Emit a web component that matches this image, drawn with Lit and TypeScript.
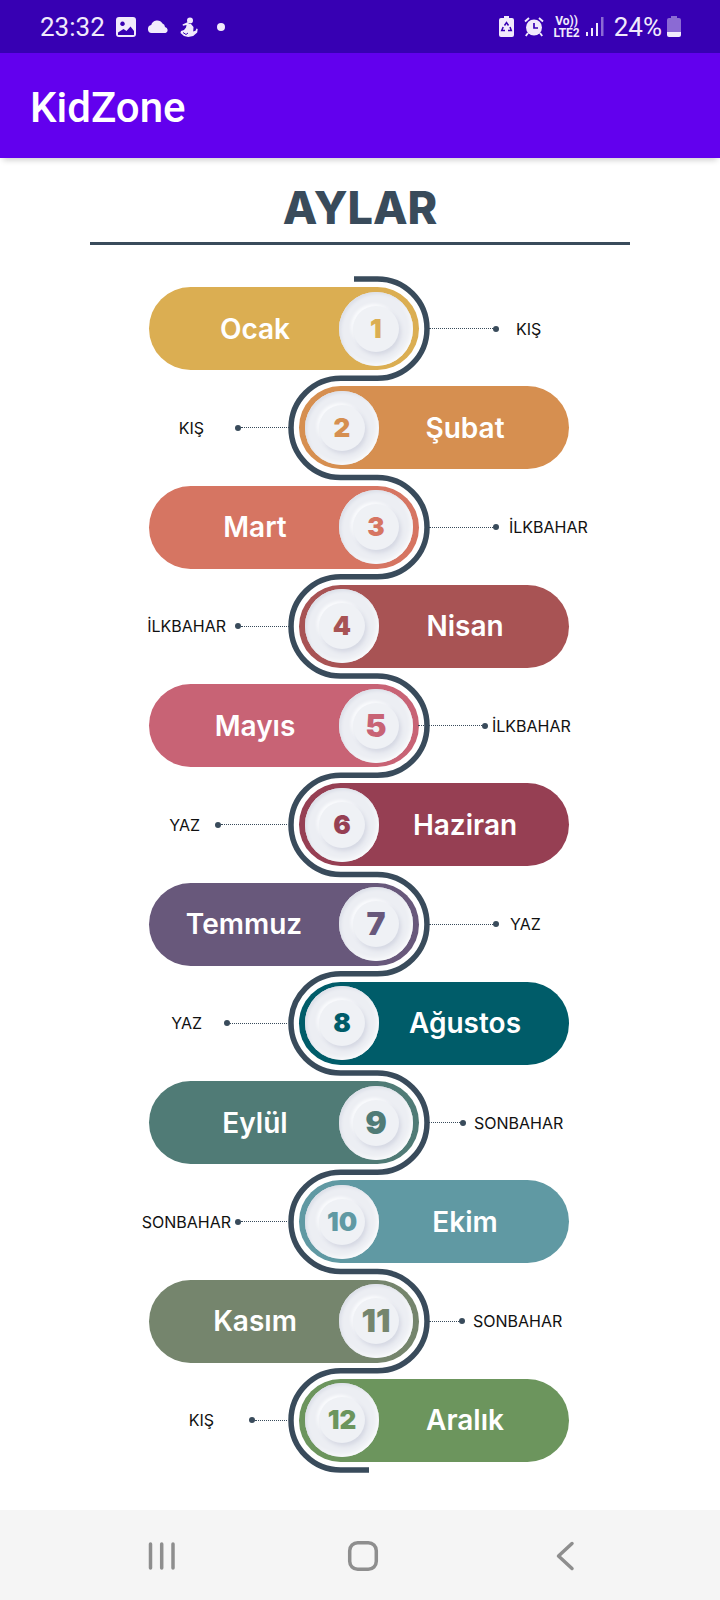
import { LitElement, html, css, svg } from "lit";
import { customElement, property } from "lit/decorators.js";
import { classMap } from "lit/directives/class-map.js";
import { styleMap } from "lit/directives/style-map.js";

interface Month {
  name: string;
  season: string;
  color: string;
  /** Length of the dotted connector including its end dot. */
  reach: number;
  /** Space between the end dot and the season name. */
  gap: number;
  /** Space between the track and the start of the connector. */
  lead?: number;
  big?: boolean;
}

const MONTHS: Month[] = [
  { name: "Ocak", season: "KIŞ", color: "#dbae52", reach: 70, gap: 17 },
  { name: "Şubat", season: "KIŞ", color: "#d68f50", reach: 54, gap: 31 },
  { name: "Mart", season: "İLKBAHAR", color: "#d67562", reach: 70, gap: 10 },
  { name: "Nisan", season: "İLKBAHAR", color: "#a85354", reach: 54, gap: 9 },
  { name: "Mayıs", season: "İLKBAHAR", color: "#c86375", reach: 70, gap: 4, lead: -11, big: true },
  { name: "Haziran", season: "YAZ", color: "#963f53", reach: 72, gap: 15, lead: 2 },
  { name: "Temmuz", season: "YAZ", color: "#68587b", reach: 70, gap: 11, big: true },
  { name: "Ağustos", season: "YAZ", color: "#005c69", reach: 63, gap: 22, lead: 2 },
  { name: "Eylül", season: "SONBAHAR", color: "#507b76", reach: 37, gap: 8, big: true },
  { name: "Ekim", season: "SONBAHAR", color: "#6099a3", reach: 52, gap: 4, lead: 2 },
  { name: "Kasım", season: "SONBAHAR", color: "#75856d", reach: 36, gap: 8, big: true },
  { name: "Aralık", season: "KIŞ", color: "#6c955d", reach: 38, gap: 35, lead: 2 },
];

@customElement("status-bar")
export class StatusBar extends LitElement {
  static styles = css`
    :host {
      display: flex;
      align-items: center;
      justify-content: space-between;
      height: 53px;
      padding: 0 39px 0 40px;
      background: #3700b3;
      color: #f1eafc;
      font: 400 26px/32px Roboto, sans-serif;
    }
    .side {
      display: flex;
      align-items: center;
    }
    .left {
      gap: 11px;
    }
    .right {
      gap: 5px;
    }
    svg {
      display: block;
      fill: currentColor;
    }
    .dot {
      width: 8px;
      height: 8px;
      margin-left: 8px;
      border-radius: 50%;
      background: currentColor;
    }
    .saver {
      margin-right: 5px;
    }
    .alarm {
      margin-right: 4px;
    }
    .network {
      display: grid;
      font: 700 12px/12px Roboto, sans-serif;
      text-align: center;
    }
    .level {
      margin-left: 5px;
    }
  `;

  render() {
    return html`
      <div class="side left">
        <span>23:32</span>
        <svg width="20" height="20" viewBox="0 0 20 20" role="img" aria-label="Görsel">
          <path fill-rule="evenodd" d="M3 0h14a3 3 0 0 1 3 3v14a3 3 0 0 1-3 3H3a3 3 0 0 1-3-3V3a3 3 0 0 1 3-3Zm-1 15.500V18h16v-4l-3.500-4.500-4 4.500-3-2ZM6.500 4.500a2.300 2.300 0 1 0 .01 0Z"/>
        </svg>
        <svg width="22" height="14" viewBox="0 0 22 14" role="img" aria-label="Hava durumu">
          <path d="M4.500 13a4 4 0 0 1-.3-7.900A6.200 6.200 0 0 1 15.500 3.500 4 4 0 0 1 18 7a3.100 3.100 0 0 1 .5 6Z"/>
        </svg>
        <svg width="18" height="20" viewBox="0 0 18 20" role="img" aria-label="Uygulama">
          <circle cx="10" cy="3.500" r="3"/>
          <path d="M2.500 7.500 8 5l1 2h2l2.500 3-.3 4.500 2.300-.7 1-2.300 1.200.5-.5 3.500-4 3.500-5 1L4 19l-3.500-3L1 14l3-1 2-2.500.5-2.500-3.500.8Z"/>
          <path d="M3 15.500 6 17.500 8 16" fill="none" stroke="#3700b3" stroke-width="1"/>
        </svg>
        <span class="dot"></span>
      </div>
      <div class="side right">
        <svg class="saver" width="15" height="21" viewBox="0 0 15 21" role="img" aria-label="Pil koruma">
          <path d="M5 0h5v2h3a2 2 0 0 1 2 2v15a2 2 0 0 1-2 2H2a2 2 0 0 1-2-2V4a2 2 0 0 1 2-2h3Z"/>
          <path d="M5.500 9.500 7.500 6.500 9.500 9.500M11 11l1.300 3.500H9M6 14.500H2.700L4.200 11" fill="none" stroke="#3700b3" stroke-width="1.500"/>
        </svg>
        <svg class="alarm" width="20" height="20" viewBox="0 0 20 20" role="img" aria-label="Alarm">
          <circle cx="10" cy="10.500" r="8"/>
          <path d="M1 4.500 5 1M19 4.500 15 1M4 16 1.800 19M16 16l2.200 3" fill="none" stroke="currentColor" stroke-width="1.900"/>
          <path d="M10 6v5h4" fill="none" stroke="#3700b3" stroke-width="1.700"/>
        </svg>
        <span class="network"><span>Vo))</span><span>LTE2</span></span>
        <svg width="19" height="20" viewBox="0 0 19 20" role="img" aria-label="Sinyal">
          <path d="M1 15h2v4H1zM6 11h2v8H6zM11 6h2v13h-2z"/>
          <path opacity=".45" d="M16 0h2.500v19H16z"/>
        </svg>
        <span class="level">24%</span>
        <svg width="14" height="21" viewBox="0 0 14 21" role="img" aria-label="Pil">
          <path opacity=".45" d="M4 0h6v2h2a2 2 0 0 1 2 2v12H0V4a2 2 0 0 1 2-2h2Z"/>
          <path d="M0 16h14v3a2 2 0 0 1-2 2H2a2 2 0 0 1-2-2Z"/>
        </svg>
      </div>
    `;
  }
}

@customElement("month-row")
export class MonthRow extends LitElement {
  @property({ attribute: false }) month!: Month;
  @property({ type: Number }) index = 1;

  static styles = css`
    :host {
      display: block;
      width: 100%;
    }
    .row {
      display: grid;
      grid-template-columns: minmax(0, 1fr) 120px minmax(0, 1fr);
      align-items: center;
    }
    .pill {
      grid-area: 1 / 1 / 2 / 3;
      justify-self: end;
      display: flex;
      align-items: center;
      box-sizing: border-box;
      width: 270px;
      height: 83px;
      padding: 0 6px 0 22px;
      border-radius: 42px;
      background: var(--tone);
    }
    .wide {
      padding-left: 0;
    }
    .name {
      flex: 1;
      text-align: center;
      color: #fff;
      font-weight: 600;
      font-size: 28px;
      line-height: 32px;
    }
    .disc {
      display: grid;
      place-items: center;
      width: 74px;
      height: 74px;
      border-radius: 50%;
      background: #eceef3;
      box-shadow: inset 2px 2px 3px #dde0e9, inset -2px -2px 4px #fafbfc;
    }
    .knob {
      display: grid;
      place-items: center;
      width: 46px;
      height: 46px;
      border-radius: 50%;
      background: #eff1f5;
      box-shadow: 2px 3px 4px #d5d8e3, -2px -2px 3px #fafbfd;
      color: var(--tone);
      font-weight: 900;
      font-size: 26px;
      line-height: 32px;
    }
    .big {
      font-size: 32px;
    }
    .note {
      grid-area: 1 / 3 / 2 / 4;
      display: flex;
      align-items: center;
      padding: 0 10px;
    }
    .line {
      display: flex;
      align-items: center;
      flex: none;
      margin-inline: var(--lead) var(--gap);
    }
    .dots {
      flex: 1;
      border-top: 1px dotted #394b5b;
    }
    .end {
      width: 6px;
      height: 6px;
      border-radius: 50%;
      background: #394b5b;
    }
    .season {
      color: #111;
      font-weight: 400;
      font-size: 16px;
      line-height: 18px;
      white-space: nowrap;
    }
    .even .pill {
      grid-area: 1 / 2 / 2 / 4;
      justify-self: start;
      flex-direction: row-reverse;
      padding: 0 18px 0 6px;
    }
    .even .note {
      grid-area: 1 / 1 / 2 / 2;
      flex-direction: row-reverse;
    }
    .even .line {
      flex-direction: row-reverse;
      margin-inline: var(--gap) var(--lead);
    }
  `;

  render() {
    const m = this.month;
    return html`
      <div
        class=${classMap({ row: true, even: this.index % 2 === 0 })}
        style=${styleMap({ "--tone": m.color, "--lead": `${m.lead ?? 0}px`, "--gap": `${m.gap}px` })}
      >
        <div class=${classMap({ pill: true, wide: m.name.length > 5 && this.index % 2 === 1 })}>
          <span class="name">${m.name}</span>
          <span class="disc">
            <span class=${classMap({ knob: true, big: !!m.big })}>${this.index}</span>
          </span>
        </div>
        <div class="note">
          <span class="line" style=${styleMap({ width: `${m.reach}px` })}>
            <span class="dots"></span><span class="end"></span>
          </span>
          <span class="season">${m.season}</span>
        </div>
      </div>
    `;
  }
}

@customElement("month-chart")
export class MonthChart extends LitElement {
  static styles = css`
    :host {
      display: flex;
      flex-direction: column;
      position: relative;
      padding-right: 2px;
    }
    .track {
      position: absolute;
      inset: 0 2px 0 0;
      margin: 0 auto;
      width: 144px;
      height: 100%;
      overflow: visible;
      fill: none;
      stroke: #394b5b;
    }
    .months {
      flex: 1;
      display: flex;
      flex-direction: column;
      margin: 0;
      padding: 0;
      list-style: none;
    }
    .item {
      flex: 1 0 99px;
      display: flex;
      align-items: center;
      position: relative;
    }
  `;

  private trackPath() {
    const step = 1191 / MONTHS.length;
    const r = step / 2;
    let d = "M67 0";
    MONTHS.forEach((_, i) => {
      const right = i % 2 === 0;
      const x = right ? 140 - r : 4 + r;
      d += `H${x}A${r} ${r} 0 0 ${right ? 1 : 0} ${x} ${(i + 1) * step}`;
    });
    return d + "H82";
  }

  render() {
    return html`
      <svg class="track" viewBox="0 0 144 1191" aria-hidden="true">
        ${svg`<path d=${this.trackPath()} stroke-width="5.500"/>`}
      </svg>
      <ol class="months">
        ${MONTHS.map(
          (m, i) => html`<li class="item"><month-row .month=${m} .index=${i + 1}></month-row></li>`
        )}
      </ol>
    `;
  }
}

@customElement("nav-bar")
export class NavBar extends LitElement {
  static styles = css`
    .bar {
      display: grid;
      grid-template-columns: repeat(3, 1fr);
      box-sizing: border-box;
      height: 90px;
      padding: 2px 57px 0 60px;
      background: #f5f5f5;
    }
    .key {
      display: grid;
      place-items: center;
      padding: 0 0 0 3px;
      border: 0;
      background: none;
      color: #8e8e8e;
    }
    svg {
      fill: none;
      stroke: currentColor;
      stroke-width: 3.500;
      stroke-linecap: round;
      stroke-linejoin: round;
    }
  `;

  render() {
    return html`
      <nav class="bar">
        <button class="key" aria-label="Son uygulamalar">
          <svg width="32" height="32" viewBox="0 0 32 32"><path d="M4.500 4v24M15.700 4v24M27 4v24"/></svg>
        </button>
        <button class="key" aria-label="Ana ekran">
          <svg width="32" height="32" viewBox="0 0 32 32"><rect x="2.700" y="2.700" width="26.600" height="26.600" rx="8"/></svg>
        </button>
        <button class="key" aria-label="Geri">
          <svg width="32" height="32" viewBox="0 0 32 32"><path d="M24 3.500 10.500 16 24 28.500"/></svg>
        </button>
      </nav>
    `;
  }
}

@customElement("app-root")
export class AppRoot extends LitElement {
  static styles = css`
    :host {
      display: flex;
      flex-direction: column;
      min-height: 100vh;
      background: #fff;
      font-family: Inter, "Open Sans", sans-serif;
    }
    .appbar {
      display: flex;
      align-items: center;
      box-sizing: border-box;
      height: 105px;
      padding: 4px 30px 0;
      background: #6200ee;
      box-shadow: 0 5px 6px -3px rgb(0 0 0 / 0.2);
      color: #fff;
      font-family: Roboto, sans-serif;
    }
    .brand {
      font-weight: 500;
      font-size: 42px;
      line-height: 48px;
    }
    .content {
      flex: 1;
      display: flex;
      flex-direction: column;
      box-sizing: border-box;
      width: 100%;
      max-width: 540px;
      margin: 0 auto;
      padding: 22px 0 40px;
    }
    .title {
      margin: 0 0 34px;
      padding-bottom: 6px;
      border-bottom: 3px solid #394b5b;
      color: #394b5b;
      font-weight: 800;
      font-size: 45px;
      line-height: 56px;
      text-align: center;
    }
    .chart {
      flex: 1;
    }
  `;

  render() {
    return html`
      <status-bar></status-bar>
      <header class="appbar"><span class="brand">KidZone</span></header>
      <main class="content">
        <h1 class="title">AYLAR</h1>
        <month-chart class="chart"></month-chart>
      </main>
      <nav-bar></nav-bar>
    `;
  }
}
